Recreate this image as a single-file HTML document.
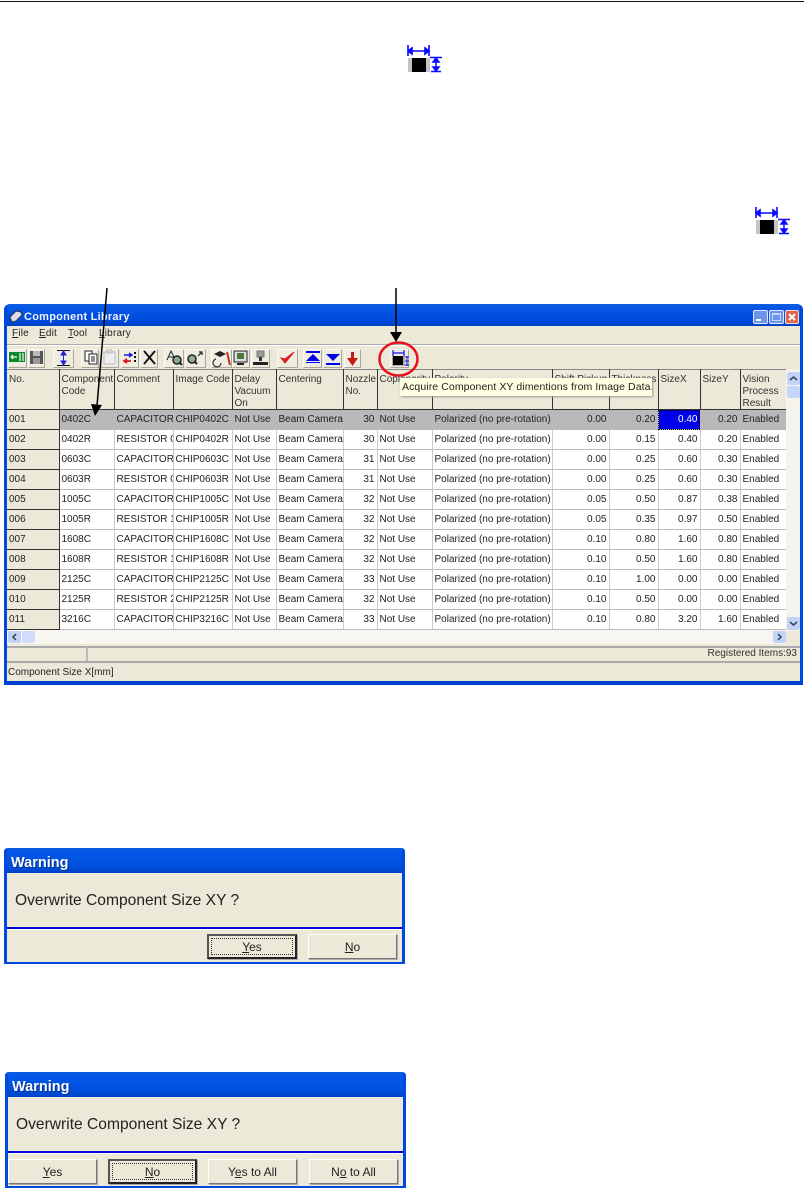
<!DOCTYPE html>
<html><head><meta charset="utf-8">
<style>
html,body{margin:0;padding:0;background:#fff}
body{position:relative;width:804px;height:1189px;overflow:hidden;font-family:"Liberation Sans",sans-serif;color:#111}
.a{position:absolute}
u{text-decoration:underline}
#win{left:4px;top:304px;width:799px;height:381px;background:#ece9d8;border-radius:6px 6px 0 0;overflow:hidden}
.tb{background:linear-gradient(#0a5fe0 0,#0a58e6 10%,#0050e0 50%,#0048d8 85%,#0040c0 100%)}
#title{left:0;top:0;width:799px;height:22px}
.menu{font-size:10px;color:#222;top:328px;letter-spacing:.2px}
table{border-collapse:collapse;table-layout:fixed;position:absolute;left:7px;top:369px;width:779px;font-size:10px;line-height:12px;background:#fff;filter:blur(.3px)}
td,th{padding:0 0 0 2px;overflow:hidden;white-space:nowrap;font-weight:normal;text-align:left;height:19px;color:#222}
th{background:#ece9d8;vertical-align:top;padding:3px 0 0 2px;height:36px;border-right:1px solid #333;border-bottom:1px solid #333;border-top:1px solid #888;color:#333;line-height:12px;white-space:normal}
th span{display:block;position:relative;top:1px}
th.n{white-space:nowrap}
td{border-right:1px solid #ccc;border-bottom:1px solid #bbb}
td:first-child{background:#ece9d8;border-right:1px solid #333;border-bottom:1px solid #333}
td.r{text-align:right;padding-right:2px}
tr.s td{background:#b9b9b9;border-color:#b9b9b9}
tr.s td:first-child{background:#ece9d8;border-color:#333}
tr.s td.c{background:#0000e8;color:#fff;outline:1px dotted #000;outline-offset:-1px}
.btn{position:absolute;background:#efede2;border-right:1px solid #aaa79a;border-bottom:1px solid #aaa79a;border-top:1px solid #fbfaf5;border-left:1px solid #fbfaf5;box-sizing:border-box}
.dlg{position:absolute;background:#ece9d8;border-radius:4px 4px 0 0;overflow:hidden}
.dt{position:absolute;left:0;top:0;width:100%;height:25px;background:linear-gradient(#0a5ae0,#0458e8 20%,#0050dc 70%,#0044c8);color:#fff;font-weight:bold;font-size:14.5px;line-height:30px;text-indent:7px;text-shadow:1px 1px 0 #003090}
.dm{position:absolute;font-size:15.6px;color:#222;white-space:nowrap}
.dl{position:absolute;height:2px;background:#0000e0;left:3px;right:3px;border-bottom:1px solid #fff}
.db{position:absolute;height:25px;box-sizing:border-box;background:#ece9d8;border:1px solid;border-color:#fff #777 #777 #fff;font-size:12px;color:#222;text-align:center;line-height:25px;box-shadow:1px 1px 0 #aaa}
.db.f{border:2px solid #222;border-color:#555 #222 #222 #555;line-height:22px}
.db.f:after{content:"";position:absolute;left:2px;right:2px;top:2px;bottom:2px;border:1px dotted #333}
.edge{position:absolute;background:#0048e0}
</style></head>
<body>
<div class="a" style="left:0;top:1px;width:804px;height:1px;background:#111"></div>

<svg class="a" style="left:407px;top:45px" width="36" height="28" viewBox="0 0 36 28">
<rect x="1" y="13" width="22" height="14" fill="#c4c4c4"/><rect x="5" y="13" width="14" height="14" fill="#000"/>
<path d="M1 0V11M22 0V11M1 6H22M1 6l4-3v6zM22 6l-4-3v6z" stroke="#0a0aff" stroke-width="1.6" fill="#0a0aff"/>
<path d="M23 12.500H35M24 26.500H34M29 13V26M29 13l-3 4h6zM29 26l-3-4h6z" stroke="#0a0aff" stroke-width="1.5" fill="#0a0aff"/>
</svg>
<svg class="a" style="left:755px;top:207px" width="36" height="28" viewBox="0 0 36 28">
<rect x="1" y="13" width="22" height="14" fill="#c4c4c4"/><rect x="5" y="13" width="14" height="14" fill="#000"/>
<path d="M1 0V11M22 0V11M1 6H22M1 6l4-3v6zM22 6l-4-3v6z" stroke="#0a0aff" stroke-width="1.6" fill="#0a0aff"/>
<path d="M23 12.500H35M24 26.500H34M29 13V26M29 13l-3 4h6zM29 26l-3-4h6z" stroke="#0a0aff" stroke-width="1.5" fill="#0a0aff"/>
</svg>

<div id="win" class="a">
 <div id="title" class="a tb"></div>
 <div class="a" style="left:0;top:0;width:3px;height:381px;background:#0048e0"></div>
 <div class="a" style="right:0;top:0;width:3px;height:381px;background:#0048e0"></div>
 <div class="a" style="left:0;bottom:0;width:799px;height:4px;background:#0040d0"></div>
</div>

<svg class="a" style="left:9px;top:310px" width="14" height="13" viewBox="0 0 14 13"><path d="M1 7L7 1l5 1 1 3-6 6-4 1z" fill="#dde" stroke="#334" stroke-width="1"/></svg>
<div class="a" style="left:24px;top:310px;font-size:11px;font-weight:bold;color:#eef2ff;letter-spacing:.25px;line-height:14px;filter:blur(.3px)">Component Library</div>
<div class="a" style="left:753px;top:310px;width:15px;height:14px;border-radius:2px;background:#6f94ec;border:1px solid #dfe8ff;box-sizing:border-box"><div class="a" style="left:2px;bottom:2px;width:5px;height:2px;background:#fff"></div></div>
<div class="a" style="left:769px;top:310px;width:15px;height:14px;border-radius:2px;background:#6f94ec;border:1px solid #dfe8ff;box-sizing:border-box"><div class="a" style="left:2px;top:2px;width:9px;height:8px;border:1px solid #c8d6ff;border-top-width:2px;box-sizing:border-box"></div></div>
<div class="a" style="left:785px;top:310px;width:14px;height:14px;border-radius:2px;background:#e0684a;border:1px solid #f6dcd2;box-sizing:border-box"></div>
<svg class="a" style="left:785px;top:310px" width="14" height="14"><path d="M4 4l6 6M10 4l-6 6" stroke="#fff" stroke-width="2"/></svg>

<div class="a menu" style="left:12px"><u>F</u>ile</div>
<div class="a menu" style="left:39px"><u>E</u>dit</div>
<div class="a menu" style="left:68px"><u>T</u>ool</div>
<div class="a menu" style="left:99px"><u>L</u>ibrary</div>
<div class="a" style="left:7px;top:344px;width:793px;height:1px;background:#aaa"></div>
<div class="a" style="left:7px;top:345px;width:793px;height:1px;background:#fff"></div>

<!-- toolbar -->
<div class="btn" style="left:8px;top:349px;width:19px;height:19px"></div>
<div class="btn" style="left:28px;top:349px;width:17px;height:19px"></div>
<div class="btn" style="left:53px;top:349px;width:21px;height:19px"></div>
<div class="btn" style="left:81px;top:349px;width:18px;height:19px"></div>
<div class="btn" style="left:100px;top:349px;width:19px;height:19px"></div>
<div class="btn" style="left:121px;top:349px;width:18px;height:19px"></div>
<div class="btn" style="left:140px;top:349px;width:18px;height:19px"></div>
<div class="btn" style="left:164px;top:349px;width:20px;height:19px"></div>
<div class="btn" style="left:185px;top:349px;width:21px;height:19px"></div>
<div class="btn" style="left:211px;top:349px;width:21px;height:19px"></div>
<div class="btn" style="left:232px;top:349px;width:18px;height:19px"></div>
<div class="btn" style="left:251px;top:349px;width:19px;height:19px"></div>
<div class="btn" style="left:277px;top:349px;width:21px;height:19px"></div>
<div class="btn" style="left:303px;top:349px;width:19px;height:19px"></div>
<div class="btn" style="left:323px;top:349px;width:19px;height:19px"></div>
<div class="btn" style="left:344px;top:349px;width:17px;height:19px"></div>
<div class="btn" style="left:390px;top:349px;width:19px;height:19px"></div>

<svg class="a" style="left:0;top:345px" width="420" height="26" viewBox="0 0 420 26">
<rect x="9" y="7" width="16" height="10" fill="#0a8a2a"/><path d="M11 12h6M11 12l2-2M11 12l2 2M20 8v8M23 8v8" stroke="#fff" stroke-width="1.2" fill="none"/>
<rect x="30" y="6" width="13" height="13" fill="#555"/><rect x="33" y="6" width="7" height="5" fill="#bbb"/><rect x="33" y="13" width="7" height="6" fill="#999"/>
<path d="M57 5.500H70M57 20.500H70" stroke="#111" stroke-width="1" fill="none"/><path d="M63.500 6V20M63.500 6l-2.500 4h5zM63.500 20l-2.500-4h5z" stroke="#2020e0" fill="#2020e0"/>
<rect x="85" y="6" width="7" height="10" fill="#fff" stroke="#222"/><rect x="89" y="9" width="8" height="10" fill="#fff" stroke="#222"/><path d="M91 12h4M91 14h4M91 16h4" stroke="#222"/>
<rect x="104" y="7" width="11" height="12" fill="#eee" stroke="#bbb"/><rect x="107" y="5" width="5" height="3" fill="#ddd" stroke="#bbb"/>
<path d="M124 10h8M129 8l3 2-3 2" stroke="#1a1ae0" stroke-width="1.4" fill="none"/><path d="M124 16h7M127 14l-3 2 3 2" stroke="#e01a1a" stroke-width="1.8" fill="none"/><path d="M135 7v2M135 11v2M135 15v2" stroke="#111" stroke-width="2"/>
<path d="M144 6L155 19M155 6L144 19" stroke="#111" stroke-width="1.9"/>
<path d="M167 15L171 6L175 14M169 12h5" stroke="#222" stroke-width="1" fill="none"/><circle cx="177" cy="15" r="4" fill="#8a8" stroke="#222" stroke-width="1.5"/><path d="M180 18l2 2" stroke="#222" stroke-width="2"/>
<circle cx="192" cy="14" r="4" fill="#9a9" stroke="#222" stroke-width="1.500"/><path d="M195 17l2 2" stroke="#222" stroke-width="2"/><path d="M198 11l4-4M199 7h3v3" stroke="#222" stroke-width="1.2" fill="none"/>
<path d="M214 9l6-3 6 3-6 3z" fill="#222"/><path d="M227 7l3 13" stroke="#d03020" stroke-width="2"/><path d="M216 14a4 4 0 1 0 5 4" stroke="#333" stroke-width="1.2" fill="none"/>
<rect x="234" y="6" width="13" height="11" fill="#ddd" stroke="#222"/><rect x="237" y="8" width="7" height="6" fill="#2a8a3a"/><circle cx="240" cy="11" r="1.500" fill="#c33"/><path d="M237 19h7" stroke="#222" stroke-width="2"/>
<rect x="257" y="6" width="7" height="6" fill="#999" stroke="#777"/><rect x="259" y="12" width="3" height="4" fill="#333"/><rect x="253" y="17" width="15" height="3" fill="#222"/>
<path d="M281 13l4 5 9-11-9 7z" fill="#d81c1c" stroke="#d81c1c"/>
<rect x="306" y="6" width="14" height="2" fill="#0000e8"/><path d="M313 9l7 7h-14z" fill="#0000e8"/><rect x="306" y="17" width="14" height="1" fill="#0000e8"/>
<path d="M326 9h14l-7 7z" fill="#0000e8"/><rect x="326" y="18" width="14" height="2" fill="#0000e8"/>
<path d="M352.500 7V14" stroke="#c81818" stroke-width="3"/><path d="M347 13h11l-5.500 8z" fill="#c81818"/>
<path d="M393 5V11M404 5V11M393 8H404" stroke="#1010f0" stroke-width="1.2" fill="none"/><rect x="392" y="11" width="13" height="10" fill="#aaa"/><rect x="393" y="11" width="10" height="9" fill="#000"/><path d="M407 11V21M405 12h4M405 20h4M405 16h4" stroke="#1010f0" fill="none"/>
</svg>

<table>
<colgroup><col style="width:52px"><col style="width:55px"><col style="width:59px"><col style="width:59px"><col style="width:44px"><col style="width:67px"><col style="width:34px"><col style="width:55px"><col style="width:120px"><col style="width:57px"><col style="width:49px"><col style="width:42px"><col style="width:40px"><col style="width:46px"></colgroup>
<tr><th><span>No.</span></th><th><span>Component Code</span></th><th><span>Comment</span></th><th class="n"><span>Image Code</span></th><th><span>Delay Vacuum On</span></th><th><span>Centering</span></th><th><span>Nozzle No.</span></th><th><span>Coplanarity</span></th><th><span>Polarity</span></th><th class="n"><span>Shift Pickup</span></th><th><span>Thickness</span></th><th><span>SizeX</span></th><th><span>SizeY</span></th><th><span>Vision Process Result</span></th></tr>
<tr class="s"><td>001</td><td>0402C</td><td>CAPACITOR</td><td>CHIP0402C</td><td>Not Use</td><td>Beam Camera</td><td class="r">30</td><td>Not Use</td><td>Polarized (no pre-rotation)</td><td class="r">0.00</td><td class="r">0.20</td><td class="r c">0.40</td><td class="r">0.20</td><td>Enabled</td></tr>
<tr><td>002</td><td>0402R</td><td>RESISTOR 0</td><td>CHIP0402R</td><td>Not Use</td><td>Beam Camera</td><td class="r">30</td><td>Not Use</td><td>Polarized (no pre-rotation)</td><td class="r">0.00</td><td class="r">0.15</td><td class="r">0.40</td><td class="r">0.20</td><td>Enabled</td></tr>
<tr><td>003</td><td>0603C</td><td>CAPACITOR</td><td>CHIP0603C</td><td>Not Use</td><td>Beam Camera</td><td class="r">31</td><td>Not Use</td><td>Polarized (no pre-rotation)</td><td class="r">0.00</td><td class="r">0.25</td><td class="r">0.60</td><td class="r">0.30</td><td>Enabled</td></tr>
<tr><td>004</td><td>0603R</td><td>RESISTOR 0</td><td>CHIP0603R</td><td>Not Use</td><td>Beam Camera</td><td class="r">31</td><td>Not Use</td><td>Polarized (no pre-rotation)</td><td class="r">0.00</td><td class="r">0.25</td><td class="r">0.60</td><td class="r">0.30</td><td>Enabled</td></tr>
<tr><td>005</td><td>1005C</td><td>CAPACITOR</td><td>CHIP1005C</td><td>Not Use</td><td>Beam Camera</td><td class="r">32</td><td>Not Use</td><td>Polarized (no pre-rotation)</td><td class="r">0.05</td><td class="r">0.50</td><td class="r">0.87</td><td class="r">0.38</td><td>Enabled</td></tr>
<tr><td>006</td><td>1005R</td><td>RESISTOR 1</td><td>CHIP1005R</td><td>Not Use</td><td>Beam Camera</td><td class="r">32</td><td>Not Use</td><td>Polarized (no pre-rotation)</td><td class="r">0.05</td><td class="r">0.35</td><td class="r">0.97</td><td class="r">0.50</td><td>Enabled</td></tr>
<tr><td>007</td><td>1608C</td><td>CAPACITOR</td><td>CHIP1608C</td><td>Not Use</td><td>Beam Camera</td><td class="r">32</td><td>Not Use</td><td>Polarized (no pre-rotation)</td><td class="r">0.10</td><td class="r">0.80</td><td class="r">1.60</td><td class="r">0.80</td><td>Enabled</td></tr>
<tr><td>008</td><td>1608R</td><td>RESISTOR 1</td><td>CHIP1608R</td><td>Not Use</td><td>Beam Camera</td><td class="r">32</td><td>Not Use</td><td>Polarized (no pre-rotation)</td><td class="r">0.10</td><td class="r">0.50</td><td class="r">1.60</td><td class="r">0.80</td><td>Enabled</td></tr>
<tr><td>009</td><td>2125C</td><td>CAPACITOR</td><td>CHIP2125C</td><td>Not Use</td><td>Beam Camera</td><td class="r">33</td><td>Not Use</td><td>Polarized (no pre-rotation)</td><td class="r">0.10</td><td class="r">1.00</td><td class="r">0.00</td><td class="r">0.00</td><td>Enabled</td></tr>
<tr><td>010</td><td>2125R</td><td>RESISTOR 2</td><td>CHIP2125R</td><td>Not Use</td><td>Beam Camera</td><td class="r">32</td><td>Not Use</td><td>Polarized (no pre-rotation)</td><td class="r">0.10</td><td class="r">0.50</td><td class="r">0.00</td><td class="r">0.00</td><td>Enabled</td></tr>
<tr><td>011</td><td>3216C</td><td>CAPACITOR</td><td>CHIP3216C</td><td>Not Use</td><td>Beam Camera</td><td class="r">33</td><td>Not Use</td><td>Polarized (no pre-rotation)</td><td class="r">0.10</td><td class="r">0.80</td><td class="r">3.20</td><td class="r">1.60</td><td>Enabled</td></tr>
</table>

<!-- v scrollbar -->
<div class="a" style="left:786px;top:369px;width:14px;height:262px;background:#f4f3ec"></div>
<div class="a" style="left:787px;top:372px;width:13px;height:13px;background:#c3d3f8;border-radius:2px"></div>
<div class="a" style="left:787px;top:386px;width:13px;height:12px;background:#c6d6fa;border-radius:2px"></div>
<div class="a" style="left:787px;top:617px;width:13px;height:13px;background:#c3d3f8;border-radius:2px"></div>
<svg class="a" style="left:787px;top:372px" width="13" height="13"><path d="M3 8l3.500-3 3.500 3" stroke="#345" stroke-width="1.500" fill="none"/></svg>
<svg class="a" style="left:787px;top:617px" width="13" height="13"><path d="M3 5l3.500 3 3.500-3" stroke="#345" stroke-width="1.500" fill="none"/></svg>
<!-- h scrollbar -->
<div class="a" style="left:7px;top:630px;width:779px;height:14px;background:#f7f6f0"></div>
<div class="a" style="left:8px;top:631px;width:13px;height:12px;background:#c3d3f8;border-radius:2px"></div>
<div class="a" style="left:22px;top:631px;width:13px;height:12px;background:#d0dcf8;border-radius:2px"></div>
<div class="a" style="left:773px;top:631px;width:13px;height:12px;background:#c3d3f8;border-radius:2px"></div>
<svg class="a" style="left:8px;top:631px" width="13" height="12"><path d="M8 3L5 6l3 3" stroke="#345" stroke-width="1.500" fill="none"/></svg>
<svg class="a" style="left:773px;top:631px" width="13" height="12"><path d="M5 3l3 3-3 3" stroke="#345" stroke-width="1.500" fill="none"/></svg>
<!-- status -->
<div class="a" style="left:7px;top:646px;width:793px;height:2px;background:#aaa"></div>
<div class="a" style="left:86px;top:647px;width:2px;height:14px;background:#bbb"></div>
<div class="a" style="left:7px;top:661px;width:793px;height:2px;background:#aaa"></div>
<div class="a" style="right:7px;top:647px;font-size:10px;line-height:13px;color:#333">Registered Items:93</div>
<div class="a" style="left:8px;top:666px;font-size:10px;line-height:13px;color:#222">Component Size X[mm]</div>

<!-- tooltip -->
<div class="a" style="left:400px;top:378px;width:252px;height:18px;background:#ffffe1;box-shadow:1px 1px 2px #999;font-size:10.5px;line-height:19px;text-indent:2px;letter-spacing:.09px;color:#222;white-space:nowrap;overflow:hidden">Acquire Component XY dimentions from Image Data.</div>

<!-- annotations -->
<svg class="a" style="left:0;top:280px" width="430" height="145" viewBox="0 0 430 145">
<path d="M107 8L97 126" stroke="#000" stroke-width="1.500"/><path d="M95 136l-4-12 11 1z" fill="#000"/>
<path d="M396 8V52" stroke="#000" stroke-width="1.500"/><path d="M396 62l-6-10h12z" fill="#000"/>
<ellipse cx="398.500" cy="79" rx="19" ry="16.500" fill="none" stroke="#e8101c" stroke-width="2.500"/>
</svg>

<!-- dialog 1 -->
<div class="dlg" style="left:4px;top:848px;width:401px;height:116px">
 <div class="dt">Warning</div>
 <div class="edge" style="left:0;top:0;width:3px;height:116px"></div>
 <div class="edge" style="right:0;top:0;width:3px;height:116px"></div>
 <div class="edge" style="left:0;bottom:0;width:401px;height:2px"></div>
 <div class="dm" style="left:11px;top:44px">Overwrite Component Size XY ?</div>
 <div class="dl" style="top:79px"></div>
 <div class="db f" style="left:203px;top:86px;width:90px"><u>Y</u>es</div>
 <div class="db" style="left:304px;top:86px;width:89px"><u>N</u>o</div>
</div>

<!-- dialog 2 -->
<div class="dlg" style="left:5px;top:1072px;width:401px;height:116px">
 <div class="dt">Warning</div>
 <div class="edge" style="left:0;top:0;width:3px;height:116px"></div>
 <div class="edge" style="right:0;top:0;width:3px;height:116px"></div>
 <div class="edge" style="left:0;bottom:0;width:401px;height:2px"></div>
 <div class="dm" style="left:11px;top:44px">Overwrite Component Size XY ?</div>
 <div class="dl" style="top:79px"></div>
 <div class="db" style="left:3px;top:87px;width:89px"><u>Y</u>es</div>
 <div class="db f" style="left:103px;top:87px;width:89px"><u>N</u>o</div>
 <div class="db" style="left:203px;top:87px;width:89px">Y<u>e</u>s to All</div>
 <div class="db" style="left:304px;top:87px;width:89px">N<u>o</u> to All</div>
</div>
</body></html>
